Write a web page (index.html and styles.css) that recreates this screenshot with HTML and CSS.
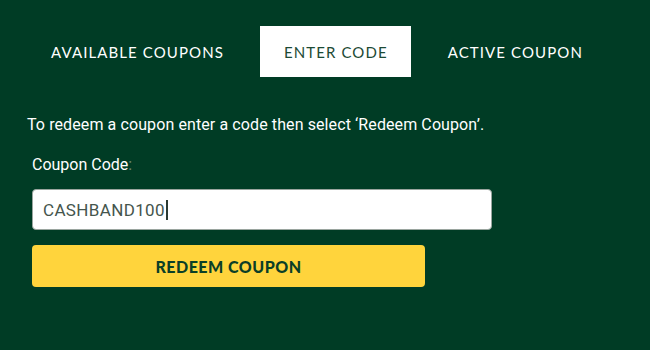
FILE: index.html
```html
<!DOCTYPE html>
<html lang="en">
<head>
<meta charset="utf-8">
<title>Coupons</title>
<link rel="stylesheet" href="styles.css">
</head>
<body>
<div class="page">
  <nav class="tabs">
    <div class="tab">AVAILABLE COUPONS</div>
    <div class="tab active">ENTER CODE</div>
    <div class="tab">ACTIVE COUPON</div>
  </nav>
  <p class="intro">To redeem a coupon enter a code then select ‘Redeem Coupon’.</p>
  <label class="label" for="code">Coupon Code<span class="colon">:</span></label>
  <div class="form">
    <div class="input" id="code"><span class="value">CASHBAND100</span><span class="caret"></span></div>
    <button class="btn" type="button">REDEEM COUPON</button>
  </div>
</div>
</body>
</html>
```
FILE: styles.css
```css
html, body {
  margin: 0;
  padding: 0;
  background: #003c25;
  width: 650px;
  height: 350px;
  overflow: hidden;
}
.page {
  padding: 26px 0 0 27px;
  font-family: "Roboto", "Liberation Sans", sans-serif;
  color: #ffffff;
}
.tabs {
  display: flex;
  gap: 13px;
  height: 51px;
}
.tab {
  display: flex;
  align-items: center;
  justify-content: center;
  padding: 0 23px 0 24px;
  font-family: "Lato", sans-serif;
  font-size: 15px;
  letter-spacing: 1.1px;
  color: #ffffff;
}
.tab.active {
  background: #ffffff;
  color: #1c4a34;
}
.intro {
  margin: 38px 0 0 0;
  font-size: 16px;
  line-height: 19px;
  letter-spacing: 0.1px;
}
.label {
  display: block;
  margin: 21px 0 0 5px;
  font-size: 16px;
  line-height: 19px;
}
.colon {
  color: #6b8a7a;
}
.form {
  margin: 15px 0 0 5px;
  display: flex;
  flex-direction: column;
  gap: 15px;
}
.input {
  height: 39px;
  width: 448px;
  background: #ffffff;
  border: 1px solid #9aa59f;
  border-radius: 4px;
  display: flex;
  align-items: center;
  padding-left: 10px;
}
.value {
  font-size: 17px;
  letter-spacing: 0.35px;
  color: #45554d;
}
.caret {
  width: 2px;
  height: 20px;
  background: #2b3a33;
  margin-left: 1px;
}
.btn {
  width: 393px;
  height: 42px;
  border: none;
  border-radius: 4px;
  background: #ffd43c;
  color: #0b3f27;
  font-family: "Lato", sans-serif;
  font-weight: 900;
  font-size: 16px;
  letter-spacing: 0.5px;
  cursor: pointer;
}
```
